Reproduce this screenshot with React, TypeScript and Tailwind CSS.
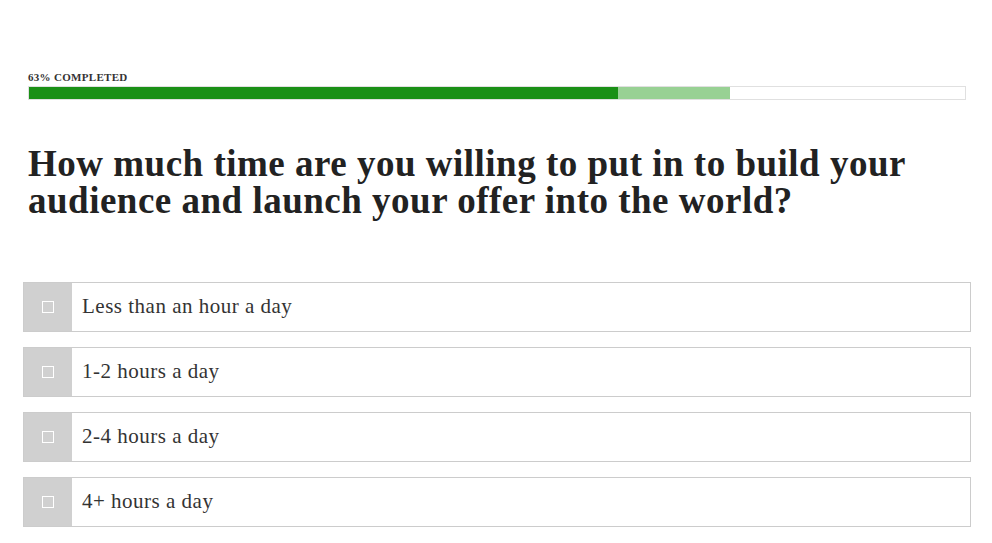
const options = ['Less than an hour a day', '1-2 hours a day', '2-4 hours a day', '4+ hours a day'];

export default function App() {
    return (
        <div className="min-h-[543px] w-[992px] bg-white text-[#222] font-['Liberation_Serif',serif]">
            <div className="px-[28px] pt-[70px]">
                <div className="text-[11px] font-bold leading-[14px] tracking-[0.3px] text-[#333]">63% COMPLETED</div>
                <div className="mt-[2px] flex h-[14px] w-[938px] border border-[#e0e0e0]">
                    <div className="h-full w-[589px] bg-[#1a9016]" />
                    <div className="h-full w-[112px] bg-[#98d194]" />
                </div>
                <h1 className="mt-[45px] text-[37px] font-bold leading-[37px] tracking-[0.5px] text-[#222]">
                    How much time are you willing to put in to build your audience and launch your offer into the world?
                </h1>
            </div>
            <div className="mt-[63px] flex flex-col gap-[15px] pl-[23px] pr-[21px]">
                {options.map((o) => (
                    <div key={o} className="flex h-[50px] border border-[#cccccc]">
                        <div className="flex w-[48px] items-center justify-center bg-[#d0d0d0]">
                            <div className="h-[12px] w-[12px] border border-white" />
                        </div>
                        <div className="flex items-center pl-[10px] text-[21px] tracking-[0.5px] text-[#333]">{o}</div>
                    </div>
                ))}
            </div>
        </div>
    );
}
